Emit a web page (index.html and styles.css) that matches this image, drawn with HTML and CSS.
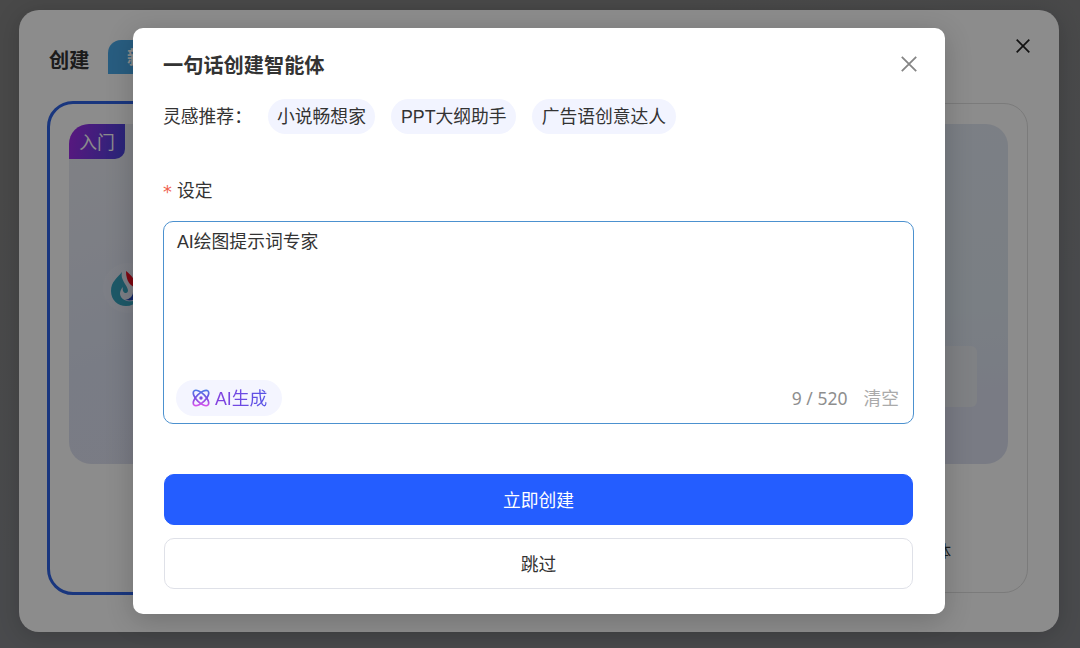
FILE: index.html
```html
<!DOCTYPE html>
<html lang="zh-CN">
<head>
    <meta charset="UTF-8">
    <title>创建智能体</title>
    <link rel="stylesheet" href="styles.css">
</head>
<body>

<div class="panel">
    <div class="panel-header">
        <h2>创建</h2>
        <span class="panel-tag">新</span>
        <svg class="panel-close" width="16" height="16" viewBox="0 0 16 16"><path d="M1.7 1.7l12.6 12.6M14.3 1.7L1.7 14.3"/></svg>
    </div>
    <div class="cards">
        <div class="card active">
            <div class="cover">
                <span class="level">入门</span>
                <svg class="logo" width="52" height="52" viewBox="0 0 52 52">
                    <circle cx="26" cy="26" r="25" fill="#fff" opacity=".12"/>
                    <path d="M20 10C15 16 9 20 9 29c0 9 7 15 15 15 5 0 9-2 12-6-8 3-17 1-18-6 0-3 1-5 3-7-1 4 1 6 3 6 4-1 1-6-1-9-3-5-4-8-3-12z" fill="#35a2be"/>
                    <path d="M24 9c5 4 10 9 10 17-5-2-10-6-10-17z" fill="#e60c20"/>
                    <path d="M23 38c5-1 8-4 8-8h5c1 5-2 10-13 8z" fill="#2348b8"/>
                </svg>
            </div>
        </div>
        <div class="card">
            <div class="cover cover-alt"><div class="preview"></div></div>
            <p class="card-text">体</p>
        </div>
    </div>
</div>

<div class="overlay">
    <div class="modal">
        <div class="modal-header">
            <h3>一句话创建智能体</h3>
            <svg class="modal-close" width="18" height="18" viewBox="0 0 18 18"><path d="M1.8 1.8l14.4 14.4M16.2 1.8L1.8 16.2"/></svg>
        </div>
        <div class="ideas">
            <span class="ideas-label">灵感推荐：</span>
            <span class="chip">小说畅想家</span>
            <span class="chip">PPT大纲助手</span>
            <span class="chip">广告语创意达人</span>
        </div>
        <div class="label"><span class="required">*</span>设定</div>
        <div class="editor">
            <div class="editor-text">AI绘图提示词专家</div>
            <div class="editor-footer">
                <div class="ai-button">
                    <svg width="18" height="18" viewBox="0 0 18 18">
                        <defs>
                            <linearGradient id="ai" x1="0" y1="0" x2="0" y2="18" gradientUnits="userSpaceOnUse">
                                <stop offset="0" stop-color="#4a7fe8"/>
                                <stop offset=".5" stop-color="#7650e0"/>
                                <stop offset="1" stop-color="#e552ee"/>
                            </linearGradient>
                        </defs>
                        <g fill="none" stroke="url(#ai)" stroke-width="1.7">
                            <path d="M2 2c2-2 7 .5 10.200 3.800S18 14 16 16s-7-.5-10.200-3.800S0 4 2 2z"/>
                            <path d="M16 2c2 2-.5 7-3.800 10.200S4 18 2 16s.5-7 3.800-10.200S14 0 16 2z"/>
                        </g>
                        <circle cx="9" cy="9" r="1.7" fill="#7a50e0"/>
                    </svg>
                    <span>AI生成</span>
                </div>
                <span class="count">9 / 520</span>
                <span class="clear">清空</span>
            </div>
        </div>
        <button class="btn btn-primary">立即创建</button>
        <button class="btn">跳过</button>
    </div>
</div>

</body>
</html>
```
FILE: styles.css
```css
* {
    box-sizing: border-box;
}
body {
    margin: 0;
    padding: 10px 21px 16px 19px;
    height: 648px;
    overflow: hidden;
    background: linear-gradient(165deg, #858585 20%, #86888c 60%);
    font-family: "Liberation Sans", "Noto Sans CJK SC", sans-serif;
    font-size: 17.8px;
    color: #333;
}
h2, h3, p {
    margin: 0;
}
svg {
    display: block;
}
.panel {
    height: 622px;
    padding: 30px 31px 37px 28px;
    border-radius: 20px;
    background: #fff;
    box-shadow: 0 4px 24px rgba(0,0,0,0.18);
}
.panel-header {
    display: flex;
    height: 61px;
    padding: 0 0 0 2px;
}
.panel-header h2 {
    width: 59px;
    line-height: 43px;
    font-size: 20.2px;
}
.panel-tag {
    width: 70px;
    height: 34px;
    padding-left: 19px;
    border-radius: 13px 13px 13px 0;
    background: #4aa9ea;
    color: #fff;
    font-size: 18px;
    font-weight: bold;
    line-height: 37px;
}
.panel-close {
    margin: -2px -3px 0 auto;
    fill: none;
    stroke: #222;
    stroke-width: 1.7;
}
.cards {
    display: grid;
    grid-template-columns: 1fr 1fr;
    gap: 20px;
    height: 494px;
}
.card {
    margin: 2px 0;
    padding: 20px 19px;
    border: 1px solid #e0e0e0;
    border-radius: 24px;
}
.card.active {
    margin: 0;
    padding: 20px 19px;
    border: 3px solid #2e63e6;
    border-radius: 26px;
}
.cover {
    display: flex;
    height: 340px;
    border-radius: 22px;
    background: linear-gradient(160deg, #eaecf3, #dde2f3 50%, #dfe1ef);
}
.cover-alt {
    align-items: flex-end;
    justify-content: flex-end;
    padding: 0 31px 57px 0;
    background: linear-gradient(175deg, #e2e7f3, #dfe8f0 55%, #dce1f1 80%);
}
.preview {
    width: 100px;
    height: 61px;
    border-radius: 6px;
    background: #e8ebf0;
}
.level {
    width: 56px;
    height: 35px;
    border-radius: 20px 0 10px 0;
    background: linear-gradient(100deg, #a32be8, #4845dc);
    color: #fff;
    line-height: 38px;
    text-align: center;
}
.logo {
    margin: 138px 0 0 -23px;
}
.card-text {
    margin-top: 76px;
    padding-right: 57px;
    font-size: 16px;
    line-height: 24px;
    text-align: right;
}
.overlay {
    position: absolute;
    inset: 0;
    padding: 28px 0 0 133px;
    background: rgba(0,0,0,0.45);
}
.modal {
    width: 812px;
    height: 586px;
    padding: 18px 31px 0 30px;
    border-radius: 10px;
    background: #fff;
    box-shadow: 0 6px 28px rgba(0,0,0,0.2);
}
.modal-header {
    display: flex;
    align-items: center;
    justify-content: space-between;
    height: 36px;
}
.modal-header h3 {
    font-size: 20.2px;
}
.modal-close {
    margin-right: -4px;
    fill: none;
    stroke: #858585;
    stroke-width: 1.8;
}
.ideas {
    display: flex;
    gap: 16px;
    margin-top: 17px;
}
.ideas-label {
    width: 88.5px;
    line-height: 36px;
    white-space: nowrap;
}
.chip {
    height: 35px;
    padding: 0 9.5px;
    border-radius: 18px;
    background: #f2f4ff;
    line-height: 36px;
}
.label {
    display: flex;
    gap: 5px;
    margin-top: 38px;
    line-height: 36px;
}
.required {
    width: 9px;
    color: #f0604d;
    font-family: "DejaVu Sans", sans-serif;
    line-height: 38px;
}
.editor {
    display: flex;
    flex-direction: column;
    justify-content: space-between;
    height: 203px;
    margin-top: 10px;
    padding: 6px 14px 7px 12px;
    border: 1px solid #4c91cf;
    border-radius: 10px;
}
.editor-text {
    padding-left: 1px;
    line-height: 28px;
}
.editor-footer {
    display: flex;
    align-items: center;
    color: #8e8e8e;
}
.ai-button {
    display: flex;
    align-items: center;
    gap: 5px;
    height: 36px;
    padding: 0 15px 0 16px;
    margin-right: auto;
    border-radius: 18px;
    background: #f4f5ff;
}
.ai-button svg {
    margin-top: -1px;
}
.ai-button span {
    margin-top: -3px;
    background: linear-gradient(90deg, #8541df, #5553e6);
    -webkit-background-clip: text;
    background-clip: text;
    color: transparent;
}
.count {
    font-family: "Noto Sans", "Noto Sans CJK SC", sans-serif;
    font-size: 17.5px;
}
.clear {
    margin: -3px 0 0 16px;
    color: #aaa;
}
.btn {
    display: block;
    width: 749px;
    height: 51px;
    margin: 13px 0 0 1px;
    padding: 0 0 2px;
    border: 1px solid #dfe1e8;
    border-radius: 10px;
    background: #fff;
    color: #333;
    font-family: inherit;
    font-size: 17.8px;
}
.btn-primary {
    margin-top: 50px;
    border-color: #245dff;
    background: #245dff;
    color: #fff;
}
```
